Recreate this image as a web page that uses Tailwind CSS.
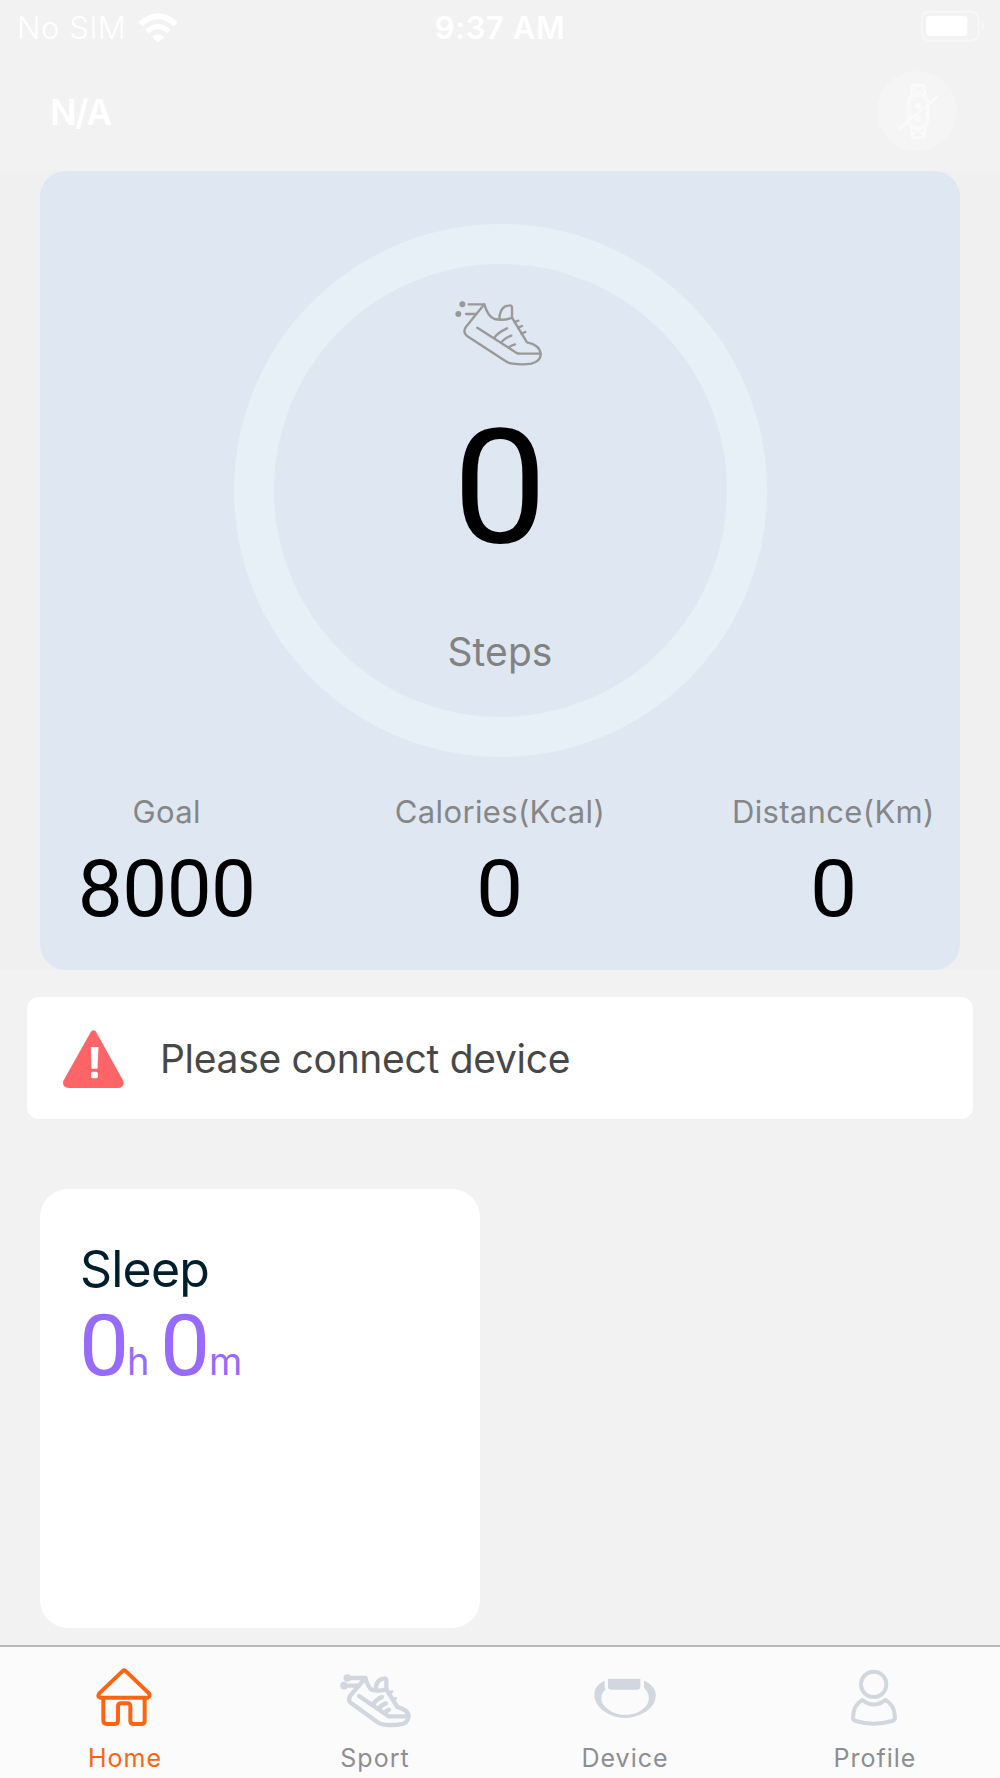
<!DOCTYPE html>
<html lang="en">
<head>
  <meta charset="UTF-8">
  <meta name="viewport" content="width=device-width, initial-scale=1">
  <title>Home</title>
  <script src="https://cdn.jsdelivr.net/npm/@tailwindcss/browser@4"></script>
</head>
<body class="bg-[#f2f2f2] font-[Inter,sans-serif]">
  <div class="flex h-[1778px] w-[1000px] flex-col overflow-hidden">

    <!-- Status bar -->
    <div class="grid h-14 grid-cols-3 items-center whitespace-nowrap text-white">
      <div class="flex items-center pl-[17px]">
        <span class="w-[121px] text-[31px] font-light leading-[56px] tracking-[0.5px]">No SIM</span>
        <svg class="-mt-px h-[30px] w-[40px]" viewBox="414 36 120 90" fill="none">
          <path d="M421 70 Q474 22 527 70" stroke="#fff" stroke-width="17"/>
          <path d="M441 92 Q474 62 507 92" stroke="#fff" stroke-width="15"/>
          <path d="M456 108 Q474 91 492 108 L474 125Z" fill="#fff"/>
        </svg>
      </div>
      <div class="text-center text-[31px] font-semibold leading-[56px] tracking-[0.6px]">9:37 AM</div>
      <div class="flex items-center justify-end pr-[14px]">
        <svg class="-mt-1 h-[32px] w-[66px]" viewBox="1262 30 198 96">
          <rect x="1268" y="35" width="170" height="87" rx="22" fill="none" stroke="#f8f8f8" stroke-width="6"/>
          <rect x="1280" y="47" width="124" height="61" rx="11" fill="#fff"/>
          <path d="M1448 63 Q1462 78 1448 93Z" fill="#f8f8f8"/>
        </svg>
      </div>
    </div>

    <!-- Header -->
    <div class="flex h-[115px] items-start justify-between pl-[50px] pr-[43px] pt-[15px]">
      <h1 class="mt-[17px] text-[35px] font-semibold leading-[48px] tracking-[-1.2px] text-white">N/A</h1>
      <div class="size-20 rounded-full bg-[#f5f5f5]">
        <svg class="size-20" viewBox="21 33 240 240" fill="none" stroke="#fafafa" stroke-width="8" stroke-linecap="round" stroke-linejoin="round">
          <path d="M123 104 L127 76 H161 L166 104"/>
          <path d="M123 204 L127 233 H161 L166 204"/>
          <path d="M129 86 L138 95 H150 L159 86 M129 224 L138 214 H150 L159 224" stroke-width="5"/>
          <rect x="114" y="102" width="60" height="104" rx="28"/>
          <rect x="121" y="109" width="46" height="90" rx="22" stroke-width="3"/>
          <path d="M89 205 L202 110" stroke-width="9"/>
          <circle cx="144" cy="138" r="6" fill="#fafafa"/>
          <circle cx="144" cy="176" r="6" fill="#fafafa"/>
        </svg>
      </div>
    </div>

    <!-- Steps card -->
    <div class="bg-[#f0f0f0] px-10">
      <div class="flex h-[799px] flex-col items-center rounded-[26px] bg-[#dfe7f2]">
        <div class="mt-[53px] flex size-[533px] shrink-0 flex-col items-center rounded-full border-[40px] border-[#e7eff7]">
          <svg class="mt-4 h-[100px] w-[120px] shrink-0" viewBox="0 0 360 300" fill="none" stroke="#999" stroke-width="7" stroke-linecap="round" stroke-linejoin="round">
            <circle cx="67" cy="73" r="5.5" fill="#999"/>
            <circle cx="55" cy="102" r="5.5" fill="#999"/>
            <path d="M86 73 H133 M78 102 H108"/>
            <path d="M133 73 L77 142 Q68 156 80 167 L195 242 Q204 250 218 251 Q248 255 274 251 Q304 243 302 220 Q299 195 261 187 L216 113 Q192 123 163 117 Q144 110 133 73Z"/>
            <path d="M178 117 Q180 78 207 76 Q216 75 216 83 V113"/>
            <path d="M112 143 L230 219 Q233 221 240 221 H301"/>
            <path d="M163 173 Q173 158 201 145 M184 187 Q191 176 214 167 M206 203 Q211 197 225 193"/>
            <path d="M224 126 L235 122 M234 143 L246 138 M244 161 L256 156"/>
          </svg>
          <div class="mt-[28px] scale-x-105 font-[Roboto,sans-serif] text-[160px] leading-[160px] text-black">0</div>
          <div class="mt-[60px] text-[39px] leading-[48px] tracking-[0.1px] text-[#828282]">Steps</div>
        </div>
        <div class="mt-[35px] grid w-[1000px] grid-cols-3 whitespace-nowrap text-center">
          <div>
            <div class="text-[31px] leading-10 tracking-[0.35px] text-[#868686]">Goal</div>
            <div class="mt-[17px] font-[Roboto,sans-serif] text-[80px] leading-[80px] tracking-[-0.5px] text-black">8000</div>
          </div>
          <div>
            <div class="text-[31px] leading-10 tracking-[0.35px] text-[#868686]">Calories(Kcal)</div>
            <div class="mt-[17px] scale-x-105 font-[Roboto,sans-serif] text-[80px] leading-[80px] text-black">0</div>
          </div>
          <div>
            <div class="text-[31px] leading-10 tracking-[0.35px] text-[#868686]">Distance(Km)</div>
            <div class="mt-[17px] scale-x-105 font-[Roboto,sans-serif] text-[80px] leading-[80px] text-black">0</div>
          </div>
        </div>
      </div>
    </div>

    <!-- Connect notice -->
    <div class="mx-[27px] mt-[27px] flex h-[122px] shrink-0 items-center rounded-xl bg-white pl-[36px] pt-[2px]">
      <svg class="h-[58px] w-[61px]" viewBox="100 752 182 174">
        <path d="M191 762 L272 908 Q274 917 266 917 H116 Q107 917 109 908Z" fill="#ff6567" stroke="#ff6567" stroke-width="18" stroke-linejoin="round"/>
        <path d="M183 803 H206 L203 868 H185Z" fill="#fff"/>
        <rect x="184" y="877" width="20" height="20" rx="5" fill="#fff"/>
      </svg>
      <span class="ml-[36px] text-[39px] leading-[48px] tracking-[-0.3px] text-[#484848]">Please connect device</span>
    </div>

    <!-- Sleep card -->
    <div class="ml-10 mt-[70px] h-[439px] w-[440px] shrink-0 rounded-[28px] bg-white pl-10 pt-[50px]">
      <h2 class="text-[50px] leading-[60px] tracking-[-0.8px] text-[#001e2c]">Sleep</h2>
      <div class="-ml-px mt-[2px] flex items-baseline leading-[90px] text-[#986bff]">
        <span class="w-[48px] origin-left scale-x-105 font-[Roboto,sans-serif] text-[85px] leading-[90px]">0</span>
        <span class="w-[33px] text-[38px]">h</span>
        <span class="w-[49px] origin-left scale-x-105 font-[Roboto,sans-serif] text-[85px] leading-[90px]">0</span>
        <span class="text-[38px]">m</span>
      </div>
    </div>

    <!-- Tab bar -->
    <div class="mt-[17px] grid h-[133px] shrink-0 grid-cols-4 border-t-2 border-[#b8b8b8] bg-[#fbfbfb] text-[25px] leading-8 tracking-[1px] text-[#8e8e93]">
      <div class="flex flex-col items-center pt-[18px] text-[#ff6510]">
        <svg class="size-16" viewBox="99 106 192 192" fill="none" stroke="#ff6510" stroke-width="12" stroke-linejoin="round">
          <path d="M187 125 Q192 119 198 125 L267 191 Q273 199 263 204 H122 Q111 202 117 192Z"/>
          <path d="M130 205 V272 Q130 283 140 283 H164 Q174 283 174 273 V230 Q174 221 184 221 H202 Q211 221 211 230 V273 Q211 283 221 283 H244 Q254 283 254 273 V205"/>
        </svg>
        <span class="mt-[13px]">Home</span>
      </div>
      <div class="flex flex-col items-center pt-[18px]">
        <svg class="h-16 w-[72px]" viewBox="837 106 216 192" fill="none" stroke="#d1d6df" stroke-width="13" stroke-linecap="round" stroke-linejoin="round">
          <circle cx="862" cy="145" r="5" fill="#d1d6df"/>
          <circle cx="852" cy="168" r="5" fill="#d1d6df"/>
          <path d="M862 145 H916 M852 168 H896"/>
          <path d="M916 145 L871 198 Q862 211 873 220 L952 277 Q962 286 988 286 Q1021 287 1037 279 Q1054 259 1037 243 Q1028 237 1012 232 L979 179 Q955 186 935 180 Q924 173 916 145Z"/>
          <path d="M947 180 Q948 148 974 146 Q980 146 979 157 V180"/>
          <path d="M897 199 L986 260 H1044"/>
          <path d="M939 224 Q948 210 966 202 M957 236 Q963 226 978 221 M973 248 L987 240"/>
          <path d="M987 190 L996 186 M997 210 L1007 206" stroke-width="9"/>
        </svg>
        <span class="mt-[13px]">Sport</span>
      </div>
      <div class="flex flex-col items-center pt-[18px]">
        <svg class="size-16" viewBox="99 106 192 192" fill="#d1d6df">
          <path d="M144 147 H241 V171 Q241 180 231 180 H154 Q144 180 144 171Z"/>
          <path d="M134 154 C92 170 94 218 132 245 C169 272 221 271 259 245 C299 217 297 170 252 153 V174 C276 197 270 230 237 246 C213 259 176 258 155 246 C119 226 116 199 137 179 Q134 176 134 171Z"/>
        </svg>
        <span class="mt-[13px]">Device</span>
      </div>
      <div class="flex flex-col items-center pt-[18px]">
        <svg class="size-16" viewBox="849 106 192 192" fill="none" stroke="#d1d6df" stroke-width="12" stroke-linejoin="round">
          <circle cx="941" cy="164" r="38"/>
          <path d="M907 211 Q880 225 879 264 Q879 271 887 274 Q941 290 996 274 Q1005 271 1005 264 Q1004 225 976 211 Q941 238 907 211Z"/>
        </svg>
        <span class="mt-[13px]">Profile</span>
      </div>
    </div>
  </div>
</body>
</html>
